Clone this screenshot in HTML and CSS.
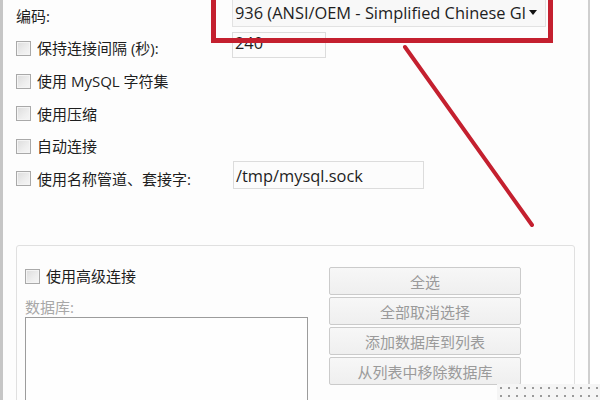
FILE: index.html
```html
<!DOCTYPE html>
<html>
<head>
<meta charset="utf-8">
<link rel="stylesheet" href="styles.css">
</head>
<body>
<div class="window">
  <div class="form">
    <div class="label plain">编码:</div>
    <div class="select"><span class="select-text">936 (ANSI/OEM - Simplified Chinese GI</span><span class="arrow"></span></div>

    <label class="label"><span class="cb"></span>保持连接间隔 (秒):</label>
    <div class="input short">240</div>

    <label class="label"><span class="cb"></span>使用 MySQL 字符集</label>
    <div></div>

    <label class="label"><span class="cb"></span>使用压缩</label>
    <div></div>

    <label class="label"><span class="cb"></span>自动连接</label>
    <div></div>

    <label class="label"><span class="cb"></span>使用名称管道、套接字:</label>
    <div class="input long">/tmp/mysql.sock</div>
  </div>

  <div class="group">
    <div class="group-left">
      <label class="label adv"><span class="cb"></span>使用高级连接</label>
      <div class="db-label">数据库:</div>
      <div class="listbox"></div>
    </div>
    <div class="buttons">
      <div class="btn">全选</div>
      <div class="btn">全部取消选择</div>
      <div class="btn">添加数据库到列表</div>
      <div class="btn">从列表中移除数据库</div>
    </div>
  </div>
</div>

<div class="redbox"></div>
<svg class="redline" width="600" height="400" viewBox="0 0 600 400">
  <line x1="405" y1="47" x2="532" y2="225" stroke="#c4202f" stroke-width="4" stroke-linecap="round"/>
</svg>
<div class="watermark"></div>
</body>
</html>
```

FILE: styles.css
```css
* { box-sizing: border-box; }
html, body {
  margin: 0;
  padding: 0;
  width: 600px;
  height: 400px;
  overflow: hidden;
  background: #ffffff;
}
body {
  position: relative;
  font-family: "Open Sans", "Noto Sans CJK SC", sans-serif;
  font-size: 15px;
  color: #1e1e1e;
}
.window {
  width: 590px;
  height: 400px;
  background: #fdfdfd;
  border-left: 3px solid #c6c6c6;
  border-right: 2px solid #cfcfcf;
  padding-left: 13px;
  overflow: hidden;
}
.form {
  display: grid;
  grid-template-columns: 216px 1fr;
  grid-template-rows: 31px 34px 32px 33px 32px 33px;
  align-items: center;
}
.label {
  display: flex;
  align-items: center;
  gap: 6px;
  white-space: nowrap;
  line-height: 18px;
}
.cb {
  display: inline-block;
  width: 15px;
  height: 15px;
  flex: none;
  border: 1px solid #a9a9a9;
  background: linear-gradient(135deg, #dcdcdc 0%, #eeeeee 60%, #f6f6f6 100%);
  box-shadow: inset 0 0 0 1px #f4f4f4;
}
.select {
  align-self: start;
  margin-top: -3px;
  width: 314px;
  height: 30px;
  border: 1px solid #e2e2e2;
  background: #f8f8f8;
  display: flex;
  align-items: center;
  padding-left: 2px;
  padding-right: 8px;
  white-space: nowrap;
  font-size: 16.4px;
}
.select-text {
  flex: 1;
  overflow: hidden;
}
.arrow {
  width: 0;
  height: 0;
  border-left: 4px solid transparent;
  border-right: 4px solid transparent;
  border-top: 5px solid #111;
  margin-left: 4px;
}
.input {
  align-self: start;
  border: 1px solid #dcdcdc;
  background: #fcfcfc;
  padding-left: 2px;
  display: flex;
  align-items: center;
  font-size: 16.4px;
}
.input.short {
  margin-top: 1px;
  width: 94px;
  height: 26px;
  padding-top: 1px;
  align-items: flex-start;
  line-height: 18px;
}
.input.long {
  margin-top: -1px;
  margin-left: 1px;
  width: 191px;
  height: 28px;
}
.group {
  margin-top: 50px;
  width: 559px;
  height: 200px;
  border: 1px solid #e0e0e0;
  border-radius: 3px;
  padding: 21px 0 0 8px;
  display: flex;
  gap: 21px;
}
.group-left {
  width: 283px;
  display: flex;
  flex-direction: column;
}
.adv {
  height: 18px;
}
.db-label {
  margin-top: 13px;
  line-height: 18px;
  color: #a8a8a8;
}
.listbox {
  margin-top: 1px;
  height: 120px;
  border: 1px solid #9c9c9c;
  background: #fefefe;
}
.buttons {
  width: 192px;
  display: flex;
  flex-direction: column;
  gap: 2px;
}
.btn {
  height: 28px;
  border: 1px solid #cbcbcb;
  border-radius: 2px;
  background: linear-gradient(#f7f7f7, #efefef);
  color: #9a9a9a;
  display: flex;
  align-items: center;
  justify-content: center;
  white-space: nowrap;
}
.redbox {
  position: absolute;
  left: 211px;
  top: -10px;
  width: 342px;
  height: 53px;
  border: 5px solid #c4202f;
}
.redline {
  position: absolute;
  left: 0;
  top: 0;
  pointer-events: none;
}
.watermark {
  position: absolute;
  left: 497px;
  top: 384px;
  width: 103px;
  height: 16px;
  background-color: #f5f5f5;
  background-image: radial-gradient(circle, #9a9a9a 0.8px, transparent 1.2px);
  background-size: 8px 8px;
  background-position: 0 0;
}
```
